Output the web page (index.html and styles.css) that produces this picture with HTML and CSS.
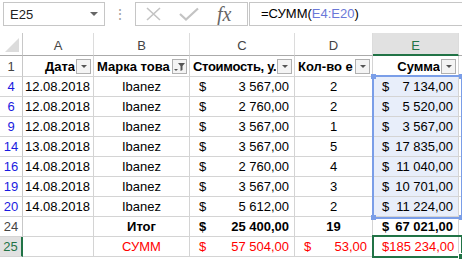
FILE: index.html
```html
<!DOCTYPE html>
<html lang="ru">
<head>
    <meta charset="UTF-8">
    <title>Итог по фильтру</title>
    <link rel="stylesheet" href="styles.css">
</head>
<body>
    <div class="toolbar">
        <div class="namebox"><span>E25</span><span class="nb-arrow"></span></div>
        <div class="dots">&#8942;</div>
        <div class="fxbox">
            <svg class="ico" width="18" height="14" viewBox="0 0 18 14"><path d="M2 1 L15 13 M15 1 L2 13" stroke="#c3c3c3" stroke-width="1.6" fill="none"/></svg>
            <svg class="ico" width="22" height="14" viewBox="0 0 22 14"><path d="M2 7 L8 12.5 L20 1.5" stroke="#c3c3c3" stroke-width="2.2" fill="none"/></svg>
            <span class="fx">fx</span>
        </div>
        <div class="formula">=СУММ(<span class="ref">E4:E20</span>)</div>
    </div>

    <div class="sheet">
        <!-- column headers -->
        <div class="cell corner"><span class="tri"></span></div>
        <div class="cell colhd">A</div>
        <div class="cell colhd">B</div>
        <div class="cell colhd">C</div>
        <div class="cell colhd">D</div>
        <div class="cell colhd active">E</div>
        <div class="cell colhd edge"></div>

        <!-- row 1 -->
        <div class="cell rowhd">1</div>
        <div class="cell flt"><span class="lbl right">Дата</span><span class="fbtn"><span class="arr"></span></span></div>
        <div class="cell flt"><span class="lbl">Марка това</span><span class="fbtn">
            <svg width="13" height="13" viewBox="0 0 13 13"><path d="M1 9 L5 9 L3 11 Z" fill="#555"/><path d="M5 3 L12 3 L9.5 6 L9.5 10 L7.5 11 L7.5 6 Z" fill="#555"/></svg>
        </span></div>
        <div class="cell flt"><span class="lbl tight">Стоимость, у.</span><span class="fbtn"><span class="arr"></span></span></div>
        <div class="cell flt"><span class="lbl">Кол-во е</span><span class="fbtn"><span class="arr"></span></span></div>
        <div class="cell flt"><span class="lbl right">Сумма</span><span class="fbtn"><span class="arr"></span></span></div>
        <div class="cell"></div>

        <!-- row 4 -->
        <div class="cell rowhd blue">4</div>
        <div class="cell right">12.08.2018</div>
        <div class="cell center">Ibanez</div>
        <div class="cell acc"><span>$</span><span>3&nbsp;567,00</span></div>
        <div class="cell center">2</div>
        <div class="cell acc hl"><span>$</span><span>7&nbsp;134,00</span></div>
        <div class="cell"></div>

        <!-- row 6 -->
        <div class="cell rowhd blue">6</div>
        <div class="cell right">12.08.2018</div>
        <div class="cell center">Ibanez</div>
        <div class="cell acc"><span>$</span><span>2&nbsp;760,00</span></div>
        <div class="cell center">2</div>
        <div class="cell acc hl"><span>$</span><span>5&nbsp;520,00</span></div>
        <div class="cell"></div>

        <!-- row 9 -->
        <div class="cell rowhd blue">9</div>
        <div class="cell right">12.08.2018</div>
        <div class="cell center">Ibanez</div>
        <div class="cell acc"><span>$</span><span>3&nbsp;567,00</span></div>
        <div class="cell center">1</div>
        <div class="cell acc hl"><span>$</span><span>3&nbsp;567,00</span></div>
        <div class="cell"></div>

        <!-- row 14 -->
        <div class="cell rowhd blue">14</div>
        <div class="cell right">13.08.2018</div>
        <div class="cell center">Ibanez</div>
        <div class="cell acc"><span>$</span><span>3&nbsp;567,00</span></div>
        <div class="cell center">5</div>
        <div class="cell acc hl"><span>$</span><span>17&nbsp;835,00</span></div>
        <div class="cell"></div>

        <!-- row 16 -->
        <div class="cell rowhd blue">16</div>
        <div class="cell right">14.08.2018</div>
        <div class="cell center">Ibanez</div>
        <div class="cell acc"><span>$</span><span>2&nbsp;760,00</span></div>
        <div class="cell center">4</div>
        <div class="cell acc hl"><span>$</span><span>11&nbsp;040,00</span></div>
        <div class="cell"></div>

        <!-- row 19 -->
        <div class="cell rowhd blue">19</div>
        <div class="cell right">14.08.2018</div>
        <div class="cell center">Ibanez</div>
        <div class="cell acc"><span>$</span><span>3&nbsp;567,00</span></div>
        <div class="cell center">3</div>
        <div class="cell acc hl"><span>$</span><span>10&nbsp;701,00</span></div>
        <div class="cell"></div>

        <!-- row 20 -->
        <div class="cell rowhd blue">20</div>
        <div class="cell right">14.08.2018</div>
        <div class="cell center">Ibanez</div>
        <div class="cell acc"><span>$</span><span>5&nbsp;612,00</span></div>
        <div class="cell center">2</div>
        <div class="cell acc hl"><span>$</span><span>11&nbsp;224,00</span></div>
        <div class="cell"></div>

        <!-- row 24 -->
        <div class="cell rowhd">24</div>
        <div class="cell"></div>
        <div class="cell center bold">Итог</div>
        <div class="cell acc bold"><span>$</span><span>25&nbsp;400,00</span></div>
        <div class="cell center bold">19</div>
        <div class="cell acc bold"><span>$</span><span>67&nbsp;021,00</span></div>
        <div class="cell"></div>

        <!-- row 25 -->
        <div class="cell rowhd current">25</div>
        <div class="cell"></div>
        <div class="cell center red">СУММ</div>
        <div class="cell acc red"><span>$</span><span>57&nbsp;504,00</span></div>
        <div class="cell acc red"><span>$</span><span>53,00</span></div>
        <div class="cell acc red"><span>$</span><span>185&nbsp;234,00</span></div>
        <div class="cell"></div>

        <div class="sel">
            <span class="hnd tl"></span><span class="hnd tr"></span>
            <span class="hnd bl"></span><span class="hnd br"></span>
        </div>
        <div class="activecell"><span class="fill"></span></div>
    </div>
</body>
</html>
```

FILE: styles.css
```css
body { margin: 0; font-family: "Liberation Sans", Arial, sans-serif; font-size: 13px; color: #000; background: #fff; width: 462px; height: 259px; overflow: hidden; }

.toolbar { display: flex; align-items: flex-start; height: 33px; padding-top: 2px; box-sizing: border-box; }
.namebox { margin-left: 3px; width: 102px; height: 24px; border: 1px solid #c6c6c6; box-sizing: border-box; display: flex; align-items: center; justify-content: space-between; padding: 0 6px; color: #222; }
.nb-arrow { width: 0; height: 0; border-left: 4px solid transparent; border-right: 4px solid transparent; border-top: 4px solid #666; }
.dots { width: 30px; text-align: center; color: #a0a0a0; line-height: 24px; font-size: 14px; }
.fxbox { width: 113px; height: 24px; border: 1px solid #c6c6c6; box-sizing: border-box; display: flex; align-items: center; padding-left: 9px; gap: 15px; overflow: hidden; }
.fx { font-family: "Liberation Serif", serif; font-style: italic; font-size: 20px; color: #666; margin-left: 2px; }
.formula { flex: 1; margin-left: 1px; height: 24px; border: 1px solid #c6c6c6; border-right: none; box-sizing: border-box; padding-left: 11px; line-height: 22px; }
.ref { color: #6a78d8; }

.sheet { display: grid; grid-template-columns: 23px 71px 96px 105px 78px 86px 3px; grid-template-rows: 23px 21px repeat(9, 20px); position: relative; }
.cell { border-right: 1px solid #d4d4d4; border-bottom: 1px solid #d4d4d4; box-sizing: border-box; padding: 0 3px; display: flex; align-items: center; white-space: nowrap; overflow: hidden; }
.corner { position: relative; border-bottom-color: #ababab; border-right-color: #c8c8c8; }
.tri { position: absolute; right: 3px; bottom: 3px; width: 0; height: 0; border-left: 14px solid transparent; border-bottom: 14px solid #dcdcdc; }
.colhd { justify-content: center; color: #444; border-bottom-color: #ababab; border-right-color: #dcdcdc; padding-top: 3px; }
.colhd.active { background: #e1e1e1; color: #217346; border-bottom: 2px solid #217346; }
.colhd.edge { border-right: none; }
.rowhd { justify-content: center; color: #444; border-right-color: #c8c8c8; padding: 0; }
.rowhd.blue { color: #1a1ae0; }
.rowhd.current { background: #e1e1e1; color: #217346; border-right: 2px solid #217346; }

.right { justify-content: flex-end; }
.center { justify-content: center; }
.acc { justify-content: space-between; padding: 0 5px 0 9px; }
.bold { font-weight: bold; }
.red { color: #ff0000; }
.hl { background: #e8eefa; }

.flt { padding: 0 2px 0 3px; font-weight: bold; gap: 1px; }
.lbl { flex: 1; overflow: hidden; }
.lbl.right { text-align: right; }
.lbl.tight { letter-spacing: -0.3px; }
.fbtn { flex: none; width: 15px; height: 15px; box-sizing: border-box; border: 1px solid #b0b0b0; background: #f4f4f4; display: flex; align-items: center; justify-content: center; }
.fbtn svg { display: block; }
.arr { width: 0; height: 0; border-left: 3px solid transparent; border-right: 3px solid transparent; border-top: 3px solid #555; }

.sel { position: absolute; grid-column: 6; grid-row: 3 / 10; top: -2px; left: -1px; right: -1px; bottom: -2px; border: 2px solid #7a9ee8; pointer-events: none; }
.hnd { position: absolute; width: 5px; height: 5px; background: #7a9ee8; }
.hnd.tl { left: -3px; top: -3px; }
.hnd.tr { right: -3px; top: -3px; }
.hnd.bl { left: -3px; bottom: -3px; }
.hnd.br { right: -3px; bottom: -3px; }

.activecell { position: absolute; grid-column: 6; grid-row: 11; top: -2px; left: -1px; right: -1px; bottom: -1px; border: 2px solid #217346; }
.fill { position: absolute; right: -4px; bottom: -4px; width: 5px; height: 5px; background: #217346; border: 1px solid #fff; }
```
